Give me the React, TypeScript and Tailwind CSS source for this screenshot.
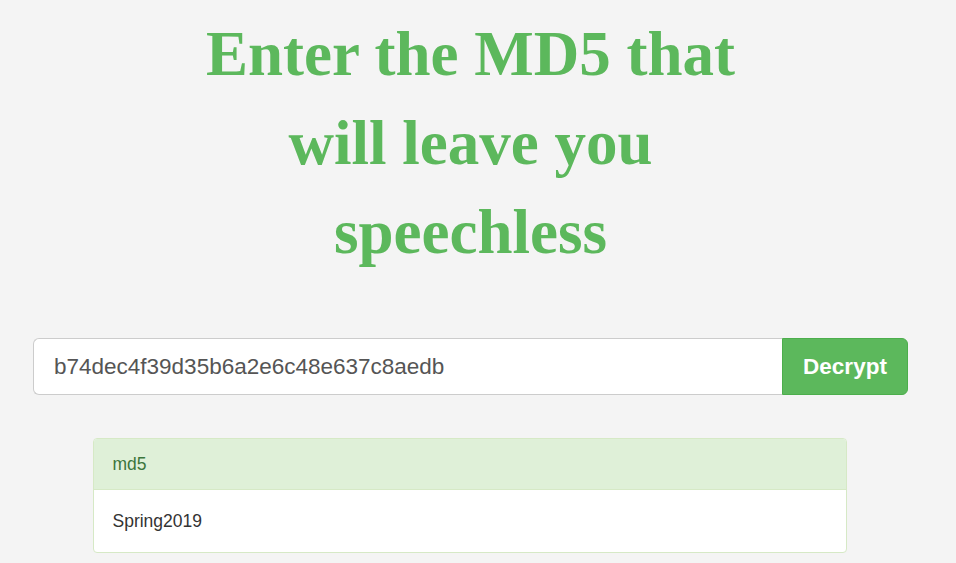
export default function App() {
  return (
    <div className="min-h-[563px] bg-[#f4f4f4] pr-[15px] overflow-hidden">
      <div className="flex flex-col items-center">
        <h1 className="w-[600px] text-center font-bold text-[63px] leading-[89px] text-[#5cb85c] pt-[10px] font-['Liberation_Serif','Times_New_Roman',serif]">
          Enter the MD5 that will leave you speechless
        </h1>
        <div className="mt-[61px] w-[875px] flex h-[57px] font-['Liberation_Sans',Arial,sans-serif]">
          <input
            readOnly
            value="b74dec4f39d35b6a2e6c48e637c8aedb"
            className="flex-1 min-w-0 bg-white border border-[#ccc] border-r-0 rounded-l-[6px] px-[20px] text-[22.5px] text-[#555] outline-none"
          />
          <button className="w-[126px] bg-[#5cb85c] border border-[#4cae4c] rounded-r-[6px] text-white font-bold text-[22.5px]">
            Decrypt
          </button>
        </div>
        <div className="mt-[43px] mr-[2px] w-[754px] bg-white border border-[#d6e9c6] rounded-[4px] font-['Liberation_Sans',Arial,sans-serif]">
          <div className="bg-[#dff0d8] border-b border-[#d6e9c6] rounded-t-[3px] h-[51px] flex items-center px-[19px] text-[17.5px] text-[#3c763d]">
            md5
          </div>
          <div className="h-[62px] flex items-center px-[19px] text-[17.5px] text-[#333]">
            Spring2019
          </div>
        </div>
      </div>
    </div>
  );
}
